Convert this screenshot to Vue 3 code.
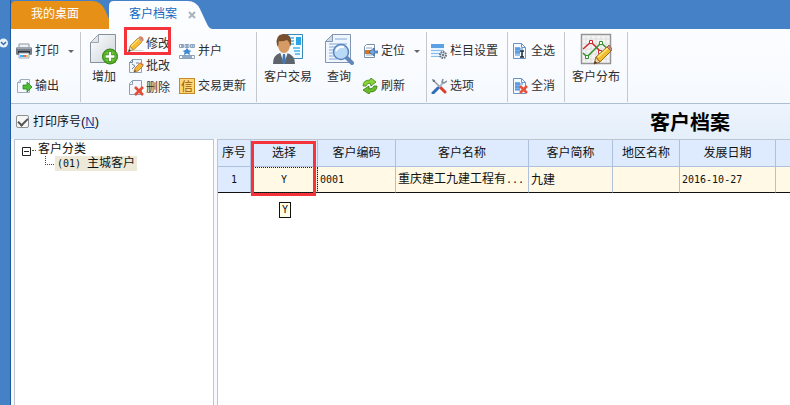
<script setup>
import { ref } from 'vue'

const printIndex = ref(true)
const columns = [
  { key: 'no', label: '序号' },
  { key: 'pick', label: '选择' },
  { key: 'code', label: '客户编码' },
  { key: 'name', label: '客户名称' },
  { key: 'short', label: '客户简称' },
  { key: 'area', label: '地区名称' },
  { key: 'date', label: '发展日期' },
  { key: 'rest', label: '' },
]
const rows = [
  { no: '1', pick: 'Y', code: '0001', name: '重庆建工九建工程有', short: '九建', area: '', date: '2016-10-27', rest: '' },
]
const latin = ['no', 'pick', 'code', 'date']
</script>

<template>
  <div class="app">
    <aside class="rail">
      <button class="rail-toggle" aria-label="展开">
        <svg width="8" height="10" viewBox="0 0 8 10"><circle cx="3.5" cy="5" r="4.5" fill="#e8f0fa" /><path d="M1 4l2.500 2.500L6 4" fill="none" stroke="#3a6cab" stroke-width="1.500" /></svg>
      </button>
    </aside>
    <div class="main">
      <nav class="tabs">
        <a href="#desktop" class="tab home">
          <svg class="shape" viewBox="0 0 98 28" preserveAspectRatio="none"><path d="M0 28V5Q0 0 5 0H81Q90 0 94 9L98 18V28Z" fill="#e79018" /></svg>
          <span>我的桌面</span>
        </a>
        <a href="#archive" class="tab current">
          <svg class="shape" viewBox="0 0 104 28" preserveAspectRatio="none"><path d="M0 28V5Q0 0 5 0H79Q87 0 91 8L98 23Q100 28 104 28Z" fill="#fbfdff" /></svg>
          <span>客户档案</span>
          <svg class="close" width="8" height="8" viewBox="0 0 8 8"><path d="M1 1l6 6M7 1L1 7" stroke="#a9b3be" stroke-width="2" /></svg>
        </a>
      </nav>

      <div class="toolbar">
        <div class="group g-print">
          <div class="two">
            <button class="tool">
              <svg width="16" height="16" viewBox="0 0 16 16"><path d="M3 1h10v5H3z" fill="#eef3f8" stroke="#8c97a5" /><rect y="4" width="16" height="8" rx="1.500" fill="#747d88" /><path d="M1 5h14" stroke="#c8d0d8" /><path d="M2 8h12v3H2z" fill="#2d333a" /><path d="M3 10h10v5H3z" fill="#fff" stroke="#9aa6b5" /><path d="M4 12h3v2H4z" fill="#35b6e4" /><path d="M7 12h3v2H7z" fill="#e55aa6" /><path d="M10 12h2v2h-2z" fill="#efc738" /></svg>
              打印<i class="caret"></i>
            </button>
            <button class="tool">
              <svg width="16" height="16" viewBox="0 0 16 16"><path d="M4.500 1.500H13.500V14.500H1.500V4.500Z" fill="#f6f9fd" stroke="#9cacbd" /><path d="M1.500 4.500h3v-3" fill="#d8e2ec" stroke="#9cacbd" /><path d="M7 7h4V4l5 5-5 5v-3H7z" fill="#4ebf35" stroke="#29851e" stroke-width=".8" /></svg>
              输出
            </button>
          </div>
        </div>

        <div class="group g-edit">
          <button class="big">
            <svg width="30" height="32" viewBox="0 0 30 32"><defs><linearGradient id="paper" x2="1" y2="1"><stop stop-color="#fff" /><stop offset="1" stop-color="#cbd3da" /></linearGradient><radialGradient id="leaf"><stop stop-color="#a4ed54" /><stop offset="1" stop-color="#49a51e" /></radialGradient></defs><path d="M9.500 1.500H26.500V29.500H1.500V9.500Z" fill="url(#paper)" stroke="#84909b" /><path d="M1.500 9.500h8v-8z" fill="#dfe5ea" stroke="#9aa5b0" /><circle cx="21" cy="23.500" r="7.500" fill="url(#leaf)" stroke="#2f8313" /><path d="M21 18.500v10M16 23.500h10" stroke="#2f8313" stroke-width="4" /><path d="M21 19v9M16.500 23.500h9" stroke="#fff" stroke-width="2.500" /></svg>
            增加
          </button>
          <div class="three">
            <button class="tool marked">
              <svg width="16" height="16" viewBox="0 0 16 16"><path d="M3 15h11l2-1H8z" fill="#cfcfcf" /><path d="M1 15l1-5 3.500 4z" fill="#f1d8a7" stroke="#8b6a36" stroke-width=".6" /><path d="M0 16l1-3 2 2z" fill="#333" /><path d="M2 10l8-8 4 4-8.500 8z" fill="#f8bd30" stroke="#ad721a" stroke-width=".7" /><path d="M3 10.500L11 3" stroke="#fff09a" /><path d="M10 2l1-1 4 4-1 1z" fill="#aebac4" /><path d="M11.500 .5c2-1 5 2 4 4l-1 .8-4-4z" fill="#dc8163" /></svg>
              修改
            </button>
            <button class="tool">
              <svg width="16" height="16" viewBox="0 0 16 16"><path d="M4.500 1.500H13.500V14.500H1.500V4.500Z" fill="#f3f7fc" stroke="#8ca0b5" /><path d="M1.500 4.500h3v-3M4 6l3 2-3 3M8 5h3" fill="none" stroke="#6782a3" /><path d="M6 14l1-4 5-5 3 3-5 5z" fill="#f4b535" stroke="#a36420" stroke-width=".7" /><path d="M12 5l1-1 3 3-1 1z" fill="#df7d56" /><path d="M6 14l1-2 1 1z" fill="#333" /></svg>
              批改
            </button>
            <button class="tool">
              <svg width="16" height="16" viewBox="0 0 16 16"><path d="M4.500 .5H13.500V14.500H1.500V3.500Z" fill="#f3f7fc" stroke="#8ca0b5" /><path d="M1.500 4.500h3v-4" fill="none" stroke="#8ca0b5" /><path d="M7 7l8 8M15 7l-8 8" stroke="#e44b34" stroke-width="2.600" /></svg>
              删除
            </button>
          </div>
          <div class="two">
            <button class="tool">
              <svg width="16" height="16" viewBox="0 0 16 16"><path d="M.5 1.500h4v3h-4zM6 1.500h4v3H6zM11.500 1.500h4v3h-4zM.5 12.500h15v3H.5z" fill="#fff" stroke="#8aa2bb" /><path d="M2 3h2M7 3h2M12.500 3h2M3 14h10" stroke="#24538f" /><path d="M8 5l1.500 2 3 1-2 1 .5 3-3-1.500L5 12l.5-3-2-1 3-1z" fill="#3d8bd1" /></svg>
              并户
            </button>
            <button class="tool">
              <svg width="16" height="16" viewBox="0 0 16 16"><rect x=".5" y=".5" width="15" height="15" fill="#ffd778" stroke="#c68a27" /><text x="8" y="12.500" text-anchor="middle" class="glyph">信</text></svg>
              交易更新
            </button>
          </div>
        </div>

        <div class="group g-view">
          <button class="big">
            <svg width="32" height="32" viewBox="0 0 32 32"><path d="M13.500 1.500h17v24h-17z" fill="#f4fbff" stroke="#3989b4" /><path d="M17 5h5M17 8h5M17 11h5M21 15h7M22 18h6M23 21h5" stroke="#43b7ed" stroke-width="1.500" /><path d="M24 4h5v8h-5z" fill="#2ba6e2" /><path d="M1 31q0-9 7-11h7q8 2 8 11z" fill="#5e6469" /><path d="M8 19l4 12 4-12z" fill="#eff5fa" /><path d="M11 21h2l1 8-2 2-2-2z" fill="#3f78b7" /><ellipse cx="12" cy="12" rx="6" ry="8" fill="#d69a65" /><path d="M5 12Q3 2 11 1q9-1 8 10l-1 3q0-5-3-7-5 2-8 1l-1 6z" fill="#79502e" /></svg>
            客户交易
          </button>
          <button class="big">
            <svg width="30" height="32" viewBox="0 0 30 32"><path d="M8.500 1.500h18v28h-25v-21z" fill="#eff6ff" stroke="#8296b2" /><path d="M1.500 8.500h7v-7z" fill="#ccd9e9" stroke="#8296b2" /><path d="M11 6h12M5 11h18M5 14h18M5 17h7M5 20h7M5 23h7M5 26h8" stroke="#84a8d3" /><path d="M22 24l6 6" stroke="#6288bb" stroke-width="4" stroke-linecap="round" /><circle cx="17" cy="19" r="7.500" fill="#b8daf7" stroke="#5c84bd" stroke-width="1.500" /><path d="M12 18q2-5 8-4" fill="none" stroke="#fff" stroke-width="2" /></svg>
            查询
          </button>
          <div class="two">
            <button class="tool">
              <svg width="16" height="16" viewBox="0 0 16 16"><path d="M4.500 1.500h8v13h-10v-11z" fill="#fff" stroke="#7992b0" /><path d="M4 5h6M4 12h6" stroke="#86a4c9" /><path d="M3 7h6v4H3z" fill="#d57526" /><path d="M16 8h-4V5L7 9l5 4v-3h4z" fill="#72a7df" stroke="#285d9d" stroke-width=".7" /></svg>
              定位<i class="caret"></i>
            </button>
            <button class="tool">
              <svg width="16" height="16" viewBox="0 0 16 16"><path d="M1 8q0-6 7-6l1-2 5 4-5 4-1-3q-3 0-4 3z" fill="#8bd532" stroke="#3a821a" stroke-width=".8" /><path d="M15 8q0 6-7 6l-1 2-6-4 6-4v3q4 0 5-3z" fill="#68bd28" stroke="#337714" stroke-width=".8" /></svg>
              刷新
            </button>
          </div>
        </div>

        <div class="group g-set">
          <div class="two">
            <button class="tool">
              <svg width="16" height="16" viewBox="0 0 16 16"><path d="M0 1h13v13H0z" fill="#e7f3ff" /><path d="M0 1h13v4H0z" fill="#5ba1e3" /><path d="M0 7.500h13M0 10.500h13M0 13.500h13" stroke="#8bbce8" /><circle cx="12" cy="12" r="3" fill="#dce1e8" stroke="#66717f" stroke-width="2" stroke-dasharray="1.500 .8" /><circle cx="12" cy="12" r="1" fill="#59636e" /></svg>
              栏目设置
            </button>
            <button class="tool">
              <svg width="16" height="16" viewBox="0 0 16 16"><path d="M3 3l6 6" stroke="#8b98a7" stroke-width="1.500" /><path d="M9 9l5 5" stroke="#dc3f2c" stroke-width="3" stroke-linecap="round" /><path d="M13 4L3 14" stroke="#aab8c7" stroke-width="2" /><path d="M7 10l-5 5" stroke="#326db9" stroke-width="3" stroke-linecap="round" /><path d="M12 1l-1 3 2 1 3-2" fill="none" stroke="#7f8d9e" stroke-width="1.500" /><path d="M1 1l3 1v2L2 4z" fill="#6e7986" /></svg>
              选项
            </button>
          </div>
        </div>

        <div class="group g-all">
          <div class="two">
            <button class="tool">
              <svg width="16" height="16" viewBox="0 0 16 16"><path d="M1.500 .5h8l4 4v11h-12z" fill="#f4faff" stroke="#6a94c5" /><path d="M9.500 .5v4h4" fill="none" stroke="#6a94c5" /><path d="M3 4h5v7H3z" fill="#73b0ed" /><path d="M3 6h8M3 9h5M3 12h5" stroke="#478bd1" /><path d="M8 8h4M10 8v6M8 14h4" fill="none" stroke="#1c2737" stroke-width="1.500" /></svg>
              全选
            </button>
            <button class="tool">
              <svg width="16" height="16" viewBox="0 0 16 16"><path d="M1.500 .5h8l4 4v11h-12z" fill="#f4faff" stroke="#6a94c5" /><path d="M9.500 .5v4h4" fill="none" stroke="#6a94c5" /><path d="M3 4h5v8H3z" fill="#73b0ed" /><path d="M3 6h8M3 9h5M3 12h5" stroke="#478bd1" /><path d="M8 8l7 7M15 8l-7 7" stroke="#e9533c" stroke-width="2.600" /></svg>
              全消
            </button>
          </div>
        </div>

        <div class="group g-map">
          <button class="big">
            <svg width="32" height="32" viewBox="0 0 32 32"><path d="M1.500 1.500h29v29h-29z" fill="#f4f4f4" stroke="#959595" stroke-width="1.500" /><path d="M6 3v26M11 3v26M16 3v26M21 3v26M26 3v26M3 6h26M3 11h26M3 16h26M3 21h26M3 26h26" stroke="#dedede" /><path d="M3 16l8-7 10 10 8-2" fill="none" stroke="#cd2929" stroke-width="1.500" /><path d="M3 20l4 4 14-14 8 7" fill="none" stroke="#35912b" stroke-width="1.500" /><path d="M9.500 7.500h3v3h-3zM18.500 17.500h3v3h-3z" fill="#fff" stroke="#cd2929" /><path d="M5.500 22.500h3v3h-3zM19.500 8.500h3v3h-3z" fill="#fff" stroke="#35912b" /><path d="M14 31l2-7 4 5z" fill="#f0d1a1" stroke="#98683c" /><path d="M14 31l1-3 2 2z" fill="#333" /><path d="M16 24l11-10 4 4-11 11z" fill="#f3be2e" stroke="#9e7021" /><path d="M18 24l10-9" stroke="#ffea8a" stroke-width="1.500" /><path d="M27 14l2-2 3 4-1 2z" fill="#d28d75" stroke="#8e6760" /></svg>
            客户分布
          </button>
        </div>
      </div>

      <div class="titlebar">
        <label class="check">
          <input v-model="printIndex" type="checkbox" accesskey="n">
          <span>打印序号<b>(<u>N</u>)</b></span>
        </label>
        <h1>客户档案</h1>
      </div>

      <div class="content">
        <section class="tree">
          <div class="node">
            <button class="fold" aria-label="折叠"><svg width="9" height="9" viewBox="0 0 9 9"><path d="M.5 .5h8v8h-8zM2 4.500h5" fill="#fff" stroke="#222" /></svg></button>
            <i class="dots"></i><span>客户分类</span>
          </div>
          <div class="node child">
            <i class="elbow"></i>
            <a href="#01" class="picked"><span class="mono">(01) </span>主城客户</a>
          </div>
        </section>

        <section class="grid">
          <table>
            <colgroup><col v-for="c in columns" :key="c.key" :class="'c-' + c.key"></colgroup>
            <thead>
              <tr><th v-for="c in columns" :key="c.key" :class="c.key">{{ c.label }}</th></tr>
            </thead>
            <tbody>
              <tr v-for="r in rows" :key="r.no">
                <td v-for="c in columns" :key="c.key" :class="[c.key, { mono: latin.includes(c.key) }]">
                  <span>{{ r[c.key] }}</span><span v-if="c.key === 'name'" class="mono">...</span>
                  <template v-if="c.key === 'pick'">
                    <i class="frame"></i><span class="tip">{{ r.pick }}</span>
                  </template>
                </td>
              </tr>
            </tbody>
          </table>
        </section>
      </div>
    </div>
  </div>
</template>

<style>
body { margin: 0; background: #fff; }
</style>

<style scoped>
.app {
  display: flex;
  min-height: 100vh;
  overflow: hidden;
  font: 12px/16px "Liberation Sans", "Noto Sans CJK SC", sans-serif;
  color: #111;
}
.app * { box-sizing: border-box; }
.app svg { flex: none; display: block; }
button { border: 0; padding: 0; background: none; font: inherit; color: #2e2e2e; white-space: nowrap; }
a { color: inherit; text-decoration: none; }

.rail { flex: none; width: 11px; background: #4481c6; border-right: 1px solid #1f5a9f; }
.rail-toggle { display: block; margin-top: 38px; }
.main { flex: 1; min-width: 0; display: flex; flex-direction: column; }

.tabs { display: flex; height: 29px; padding-top: 1px; background: #4481c6; }
.tab { position: relative; display: flex; align-items: center; width: 98px; padding: 0 0 3px 20px; color: #fff; }
.tab span { position: relative; }
.tab.current { width: 104px; color: #1267bd; }
.shape { position: absolute; inset: 0; width: 100%; height: 100%; }
.close { position: relative; margin: 2px 0 0 11px; }

.toolbar { display: flex; height: 75px; padding-top: 3px; background: linear-gradient(#fcfdff, #f5f9fe); border-bottom: 1px solid #aebfd2; }
.group { position: relative; display: flex; align-items: flex-start; flex: none; height: 70px; border-right: 1px solid #c5c9ce; }
.tool { display: flex; align-items: center; gap: 3px; }
.two { display: grid; grid-template-rows: 34px 34px; gap: 1px; padding-top: 2px; }
.three { display: grid; grid-template-rows: 22px 22px 22px; padding-top: 1px; }
.three .tool { gap: 2px; }
.big { display: flex; flex-direction: column; align-items: center; gap: 4px; padding-top: 1px; }
.caret { margin-left: 6px; border: 3px solid transparent; border-top-color: #666; border-bottom: 0; }
.glyph { font: 12px "Noto Sans CJK SC", sans-serif; fill: #9a5b08; }

.g-print { width: 70px; padding-left: 5px; }
.g-edit { width: 176px; padding-left: 8px; gap: 9px; }
.g-view { width: 170px; padding-left: 7px; gap: 8px; }
.g-view .big + .big { padding-left: 4px; }
.g-set { width: 81px; padding-left: 4px; }
.g-all { width: 57px; padding-left: 4px; }
.g-map { width: 63px; padding-left: 7px; }

.marked { position: relative; }
.marked::after, .frame { content: ""; position: absolute; border: 3px solid #f5333a; pointer-events: none; }
.marked::after { inset: -6px -1px 0 -4px; }

.titlebar { display: flex; align-items: center; justify-content: space-between; height: 35px; padding: 0 60px 0 5px; background: linear-gradient(#eef4fd, #e4effa); }
.check { display: flex; align-items: center; gap: 4px; }
.check input { appearance: none; display: grid; place-items: center; margin: 0; width: 13px; height: 13px; border: 1px solid #8e8f8f; border-radius: 2px; background: #f6f6f6; }
.check input:checked::before { content: ""; width: 8px; height: 4px; margin-bottom: 2px; border: solid #555; border-width: 0 0 2px 2px; transform: rotate(-45deg); }
.check b { font-weight: 400; font-size: 13px; }
.check u { color: #174a9c; }
h1 { margin: 0; font: bold 20px/28px "Noto Sans CJK SC", sans-serif; color: #000; }

.content { flex: 1; display: flex; gap: 3px; padding-left: 3px; background: #f7f9fc; }
.tree { flex: none; width: 200px; padding: 2px 0 0 7px; background: #fff; border: solid #bec5ce; border-width: 1px 1px 0; }
.node { display: flex; align-items: center; height: 14px; }
.fold { margin-top: 4px; }
.dots { width: 4px; margin: 2px 2px 0 1px; border-top: 1px dotted #555; }
.child { padding-left: 23px; }
.elbow { width: 9px; height: 9px; margin: 0 1px 6px 0; border: dotted #444; border-width: 0 0 1px 1px; }
.picked { padding: 0 2px; line-height: 14px; background: #ece9d8; }
.mono { font-family: "DejaVu Sans Mono", monospace; font-size: 10px; white-space: pre-wrap; }

.grid { flex: 1; min-width: 0; background: #fff; border: solid #bec5ce; border-width: 1px 0 0 1px; }
table { width: 100%; table-layout: fixed; border-collapse: separate; border-spacing: 0; }
th, td { height: 27px; padding: 0 2px; border-right: 1px solid #afc0dd; text-align: left; white-space: nowrap; }
th { font-weight: 400; text-align: center; background: #deebff; border-bottom: 1px solid #afc0dd; }
td { height: 26px; background: #fff9e5; border-bottom: 1px solid #111; }
td.no { text-align: center; background: #deebff; }
td.pick { position: relative; text-align: center; outline: 1px dotted #222; outline-offset: -1px; }
th:last-child, td:last-child { border-right: 0; }
.c-no { width: 33px; }
.c-pick, .c-area { width: 67px; }
.c-code { width: 78px; }
.c-name { width: 133px; }
.c-short { width: 84px; }
.c-date { width: 96px; }
.frame { inset: -26px 1px -4px 0; }
.tip { position: absolute; left: 28px; top: 35px; padding: 0 2px; border: 1px solid #111; background: #ffffe5; line-height: 14px; }
</style>
